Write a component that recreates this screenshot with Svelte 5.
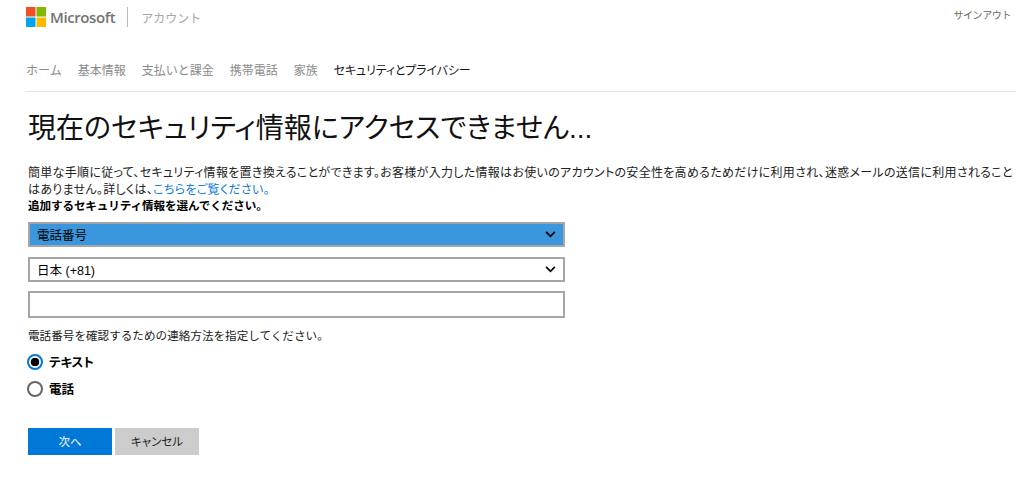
<script lang="ts">
  const navItems = ['ホーム', '基本情報', '支払いと課金', '携帯電話', '家族']
  let contactMethod = $state('text')
</script>

<div class="page">
  <header class="topbar">
    <div class="brand">
      <svg class="logo" viewBox="0 0 20 20" width="20" height="20" aria-hidden="true">
        <rect x="0" y="0" width="9.5" height="9.5" fill="#f25022" />
        <rect x="10.5" y="0" width="9.5" height="9.5" fill="#7fba00" />
        <rect x="0" y="10.5" width="9.5" height="9.5" fill="#00a4ef" />
        <rect x="10.5" y="10.5" width="9.5" height="9.5" fill="#ffb900" />
      </svg>
      <span class="wordmark">Microsoft</span>
      <span class="divider"></span>
      <span class="product">アカウント</span>
    </div>
    <a class="signout" href="#top">サインアウト</a>
  </header>

  <nav class="nav">
    {#each navItems as item}
      <a href="#top">{item}</a>
    {/each}
    <a class="current" href="#top">セキュリティとプライバシー</a>
  </nav>

  <main class="content">
    <h1>現在のセキュリティ情報にアクセスできません...</h1>
    <p class="intro">
      簡単な手順に従って、セキュリティ情報を置き換えることができます。お客様が入力した情報はお使いのアカウントの安全性を高めるためだけに利用され、迷惑メールの送信に利用されることはありません。詳しくは、<a href="#top">こちらをご覧ください。</a>
    </p>
    <p class="label">追加するセキュリティ情報を選んでください。</p>

    <div class="field select selected">
      <span>電話番号</span>
      <svg viewBox="0 0 12 8" width="11" height="7" aria-hidden="true"><path d="M1 1l5 5 5-5" /></svg>
    </div>
    <div class="field select">
      <span>日本 (+81)</span>
      <svg viewBox="0 0 12 8" width="11" height="7" aria-hidden="true"><path d="M1 1l5 5 5-5" /></svg>
    </div>
    <input class="field phone" type="text" aria-label="電話番号" />

    <p class="hint">電話番号を確認するための連絡方法を指定してください。</p>

    <label class="radio">
      <input type="radio" bind:group={contactMethod} value="text" />
      <span class="dot"></span>
      テキスト
    </label>
    <label class="radio">
      <input type="radio" bind:group={contactMethod} value="call" />
      <span class="dot"></span>
      電話
    </label>

    <div class="actions">
      <button class="primary">次へ</button>
      <button>キャンセル</button>
    </div>
  </main>
</div>

<style>
  :global(body) {
    background: #fff;
    font-family: "Liberation Sans", "Noto Sans CJK JP", sans-serif;
    color: #000;
  }
  .page {
    height: 490px;
    padding: 0 8px 0 26px;
    box-sizing: border-box;
    overflow: hidden;
  }
  .topbar {
    display: flex;
    justify-content: space-between;
    align-items: flex-start;
    padding-top: 7px;
  }
  .brand {
    display: flex;
    align-items: center;
    height: 20px;
  }
  .wordmark {
    margin-left: 4px;
    font-family: "Open Sans", sans-serif;
    font-size: 15px;
    font-weight: 600;
    color: #737373;
    letter-spacing: -0.4px;
  }
  .divider {
    width: 1px;
    height: 20px;
    margin: 0 12px;
    background: #b8b8b8;
  }
  .product {
    font-size: 12px;
    color: #a6a6a6;
    margin-left: 1px;
  }
  .signout {
    font-size: 10px;
    letter-spacing: -0.4px;
    color: #666;
    text-decoration: none;
    margin-right: 5px;
  }
  .nav {
    display: flex;
    gap: 16px;
    margin-top: 36px;
    padding-bottom: 12px;
    border-bottom: 1px solid #e6e6e6;
    font-size: 12px;
    line-height: 16px;
  }
  .nav a {
    color: #8a8a8a;
    text-decoration: none;
  }
  .nav a.current {
    color: #1a1a1a;
    font-feature-settings: "palt";
    letter-spacing: -0.15px;
  }
  .content {
    padding-left: 2px;
  }
  h1 {
    margin: 17px 0 0;
    font-size: 28px;
    line-height: 40px;
    font-weight: 400;
    color: #111;
    font-feature-settings: "palt";
  }
  .intro {
    margin: 16px 0 0;
    font-size: 12px;
    line-height: 16.5px;
    letter-spacing: 0.3px;
    width: 985px;
    color: #222;
    font-feature-settings: "palt";
  }
  .intro a {
    color: #0f7ad8;
    text-decoration: none;
  }
  .label {
    margin: 0;
    font-size: 11.6px;
    line-height: 16.5px;
    letter-spacing: -0.12px;
    font-weight: 700;
  }
  .field {
    box-sizing: border-box;
    display: flex;
    align-items: center;
    justify-content: space-between;
    width: 537px;
    height: 25px;
    margin: 0;
    padding: 0 7px;
    border: 2px solid #a6a6a6;
    border-radius: 0;
    background: #fff;
    font: inherit;
    font-size: 12.5px;
  }
  .select {
    margin-top: 9.5px;
  }
  .selected {
    margin-top: 7.5px;
    background: #3a96dd;
  }
  .phone {
    height: 27px;
    margin-top: 9px;
  }
  .select svg path {
    fill: none;
    stroke: #000;
    stroke-width: 2;
  }
  .hint {
    margin: 9px 0 0;
    font-size: 11.6px;
    line-height: 17px;
    color: #222;
  }
  .radio {
    display: flex;
    align-items: center;
    gap: 6px;
    height: 16px;
    margin-top: 10px;
    margin-left: -1px;
    font-size: 12.5px;
    font-weight: 700;
    font-feature-settings: "palt";
  }
  .radio + .radio {
    margin-top: 11px;
  }
  .radio input {
    display: none;
  }
  .dot {
    box-sizing: border-box;
    width: 16px;
    height: 16px;
    border: 2px solid #666;
    border-radius: 50%;
    background: #fff;
  }
  .radio input:checked + .dot {
    border-color: #0078d7;
    background: radial-gradient(circle, #000 0 4px, #fff 4.6px);
  }
  .actions {
    display: flex;
    gap: 3px;
    margin-top: 31px;
  }
  button {
    width: 84px;
    height: 27px;
    border: 0;
    padding: 0;
    background: #ccc;
    color: #222;
    font: inherit;
    font-size: 11.5px;
    font-feature-settings: "palt";
  }
  button.primary {
    background: #0078d7;
    color: #fff;
  }
</style>
